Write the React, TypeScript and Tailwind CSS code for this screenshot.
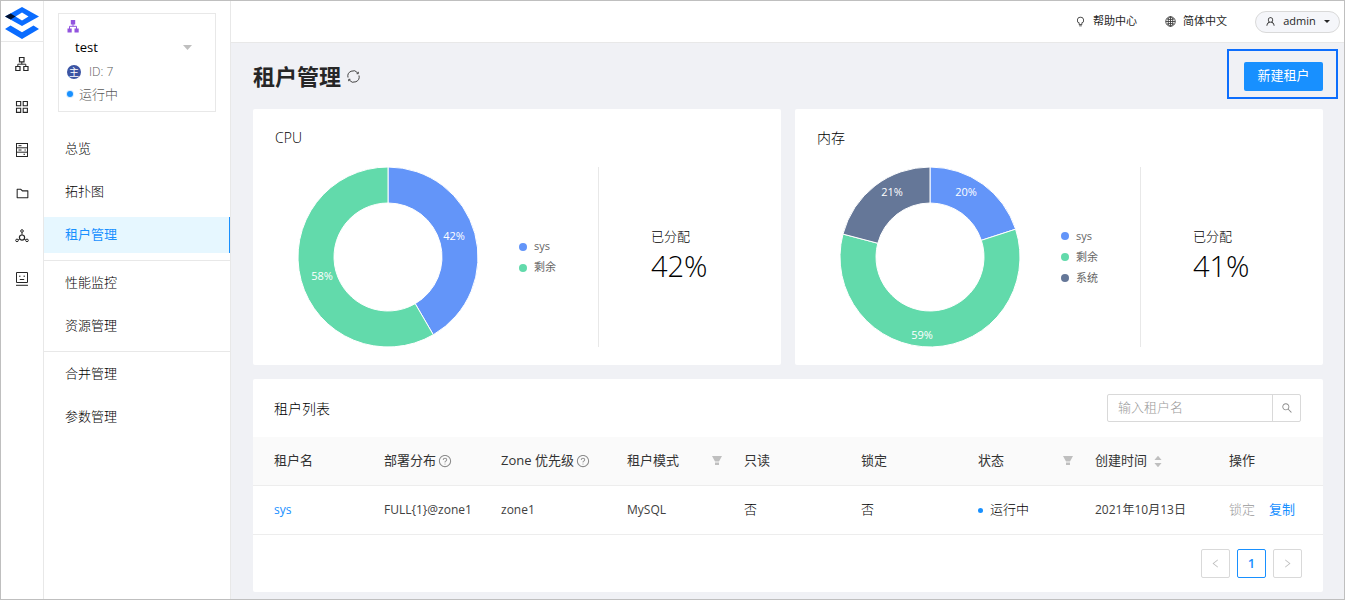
import type { ReactNode } from 'react';
import {
  AiFillCaretDown,
  AiFillCaretUp,
  AiOutlineBulb,
  AiOutlineFolder,
  AiOutlineLeft,
  AiOutlineQuestionCircle,
  AiOutlineRight,
  AiOutlineSearch,
  AiOutlineUser,
} from 'react-icons/ai';

type Slice = { name: string; label: string; share: number; color: string; x: number; y: number };

const cpu: Slice[] = [
  { name: 'sys', label: '42%', share: 0.416, color: '#6395f9', x: 156, y: 69 },
  { name: '剩余', label: '58%', share: 0.584, color: '#62daab', x: 24, y: 109 },
];

const memory: Slice[] = [
  { name: 'sys', label: '20%', share: 0.2, color: '#6395f9', x: 126, y: 25 },
  { name: '剩余', label: '59%', share: 0.591, color: '#62daab', x: 82, y: 168 },
  { name: '系统', label: '21%', share: 0.209, color: '#657798', x: 52, y: 25 },
];

function point(r: number, turn: number) {
  const a = turn * Math.PI * 2;
  return `${90 + r * Math.sin(a)} ${90 - r * Math.cos(a)}`;
}

function Donut({ slices }: { slices: Slice[] }) {
  let start = 0;
  return (
    <svg viewBox="0 0 180 180" className="size-[180px] shrink-0 font-normal">
      {slices.map((s) => {
        const from = start;
        const to = start + s.share;
        start = to;
        const big = s.share > 0.5 ? 1 : 0;
        return (
          <path
            key={s.name}
            d={`M${point(90, from)} A90 90 0 ${big} 1 ${point(90, to)} L${point(54, to)} A54 54 0 ${big} 0 ${point(54, from)} Z`}
            fill={s.color}
            stroke="#fff"
            strokeWidth="1"
          />
        );
      })}
      {slices.map((s) => (
        <text key={s.name} x={s.x} y={s.y + 4} textAnchor="middle" fontSize="11" fill="#fff">
          {s.label}
        </text>
      ))}
    </svg>
  );
}

function UsageCard({ title, slices, total }: { title: string; slices: Slice[]; total: string }) {
  return (
    <section className="rounded-xs bg-white pt-[18px] pb-[18px]">
      <h2 className="pl-[22px] text-[14px] leading-[22px]">{title}</h2>
      <div className="mt-[18px] grid grid-cols-[345fr_183fr]">
        <div className="flex items-center gap-[41px] pl-[45px]">
          <Donut slices={slices} />
          <ul>
            {slices.map((s) => (
              <li key={s.name} className="flex h-[21px] items-center gap-[7px] text-[11px] font-normal text-[#666]">
                <span className="size-[8px] rounded-full" style={{ backgroundColor: s.color }} />
                {s.name}
              </li>
            ))}
          </ul>
        </div>
        <div className="flex flex-col justify-center border-l border-[#e8e8e8] pb-[2px] pl-[52px]">
          <div className="text-[13px] leading-[20px]">已分配</div>
          <div className="text-[29px] leading-[40px]">{total}</div>
        </div>
      </div>
    </section>
  );
}

function ClusterIcon() {
  return (
    <svg viewBox="0 0 14 14" className="size-[14px]" fill="none" stroke="currentColor">
      <path d="M4.5.5h4.5v4.3H4.5zM.8 9.5h4.2v4H.8zM8.8 9.5h4.2v4H8.8z" strokeWidth="1.2" />
      <path d="M6.8 5v2.2M2.8 9.4V7.2h8v2.2" />
    </svg>
  );
}

function GridIcon() {
  return (
    <svg viewBox="0 0 14 14" className="size-[14px]" fill="none" stroke="currentColor" strokeWidth="1.1">
      <path d="M1.5 1.5h4.2v4.2H1.5zM8.2 1.5h4.2v4.2H8.2zM1.5 8.2h4.2v4.2H1.5zM8.2 8.2h4.2v4.2H8.2z" />
    </svg>
  );
}

function ServerIcon() {
  return (
    <svg viewBox="0 0 14 14" className="size-[14px]" fill="none" stroke="currentColor">
      <rect x="1.5" y="0.5" width="11" height="13" />
      <path d="M1.5 4.8h11M1.5 9.2h11M3.5 2.7h3M3.5 7h3M9.5 7h1.3M8.5 11.3h1.5" />
    </svg>
  );
}

function NodesIcon() {
  return (
    <svg viewBox="0 0 14 14" className="size-[14px]" fill="none" stroke="currentColor">
      <circle cx="7" cy="8.6" r="2.6" strokeWidth="1.2" />
      <circle cx="7" cy="2" r="1.3" />
      <circle cx="2" cy="11.4" r="1.3" />
      <circle cx="12" cy="11.4" r="1.3" />
      <path d="M7 3.3v2.6M4.8 10l-1.6.8M9.2 10l1.6.8" />
    </svg>
  );
}

function FaceIcon() {
  return (
    <svg viewBox="0 0 14 14" className="size-[14px]" fill="none" stroke="currentColor">
      <path d="M1.5.5h11v10h-11zM1 13.3h12" />
      <path d="M4 4.2h1.5M8.5 4.2h1.5M4.8 7.5h4.4" />
    </svg>
  );
}

function TreeIcon() {
  return (
    <svg viewBox="0 0 12 13" className="ml-[-1px] h-[13px] w-[12px]" fill="#9254de">
      <path d="M3.8 0h4.4v4.4H3.8zM.5 8.5h4.2v4H.5zM7.5 8.5h4.2v4H7.5z" />
      <path d="M6 4v2.3M2.5 9V6.3h7V9" fill="none" stroke="#9254de" />
    </svg>
  );
}

function RefreshIcon() {
  return (
    <svg viewBox="0 0 13 13" className="size-[13px]" fill="none" stroke="#434343">
      <path d="M1 7.5A5.5 5.5 0 0 1 10.8 3M12 5.5A5.5 5.5 0 0 1 2.2 10" />
      <path d="M11.3 1.8v1.9H9.6M1.7 11.2V9.3h1.7" />
    </svg>
  );
}

function FilterIcon() {
  return (
    <svg viewBox="0 0 10 10" className="size-[10px]" fill="currentColor">
      <path d="M0 0h10L7 5.5H3zM3 6.5h4V9H3z" />
    </svg>
  );
}

function GlobeIcon() {
  return (
    <svg viewBox="0 0 12 12" className="size-[11px]" fill="none" stroke="#333" strokeWidth=".9">
      <circle cx="6" cy="6" r="5.2" />
      <ellipse cx="6" cy="6" rx="2.5" ry="5.2" />
      <path d="M.8 6h10.4M6 .8v10.4M1.8 3.2q4.2 1.6 8.4 0M1.8 8.8q4.2-1.6 8.4 0" />
    </svg>
  );
}

function Logo() {
  return (
    <svg viewBox="0 0 34 32" className="h-[32px] w-[34px]">
      <path fill="#0a6cff" fillRule="evenodd" d="M17 0 34 9.5 17 19 0 9.5zM17 5.5 10.5 9.5 17 13.5 23.5 9.5z" />
      <path fill="#04112e" d="M5.6 6.4 10.5 9.5 5.6 12.6 0 9.5z" />
      <path fill="#0a6cff" d="M5.5 18.5 17 25.3l11.5-6.8L34 22 17 32 0 22z" />
    </svg>
  );
}

const rail: { label: string; icon: ReactNode }[] = [
  { label: '集群', icon: <ClusterIcon /> },
  { label: '租户', icon: <GridIcon /> },
  { label: '主机', icon: <ServerIcon /> },
  { label: '软件包', icon: <AiOutlineFolder className="size-[15px]" /> },
  { label: '任务', icon: <NodesIcon /> },
  { label: '系统', icon: <FaceIcon /> },
];

const menu = [['总览', '拓扑图', '租户管理'], ['性能监控', '资源管理'], ['合并管理', '参数管理']];

const columns: { title: string; width: string; extra?: 'help' | 'filter' | 'sort' }[] = [
  { title: '租户名', width: 'w-[131px]' },
  { title: '部署分布', width: 'w-[117px]', extra: 'help' },
  { title: 'Zone 优先级', width: 'w-[126px]', extra: 'help' },
  { title: '租户模式', width: 'w-[117px]', extra: 'filter' },
  { title: '只读', width: 'w-[117px]' },
  { title: '锁定', width: 'w-[117px]' },
  { title: '状态', width: 'w-[117px]', extra: 'filter' },
  { title: '创建时间', width: 'w-[134px]', extra: 'sort' },
  { title: '操作', width: 'w-[94px]' },
];

function HeadCell({ title, extra }: { title: string; extra?: string }) {
  return (
    <div className="flex items-center">
      <span>{title}</span>
      {extra === 'help' && <AiOutlineQuestionCircle className="ml-[2px] size-[14px] text-[#8c8c8c]" />}
      {extra === 'filter' && (
        <button aria-label={`筛选${title}`} className="mr-[22px] ml-auto text-[#bfbfbf]">
          <FilterIcon />
        </button>
      )}
      {extra === 'sort' && (
        <button aria-label="排序" className="ml-[6px] flex flex-col text-[#bfbfbf]">
          <AiFillCaretUp className="size-[10px]" />
          <AiFillCaretDown className="-mt-[3px] size-[10px]" />
        </button>
      )}
    </div>
  );
}

export default function App() {
  return (
    <div className="flex min-h-screen border border-[#bfbfbf] bg-white font-['Open_Sans','Noto_Sans_CJK_SC',sans-serif] text-[13px] font-light text-black">
      <nav aria-label="主导航" className="w-[43px] shrink-0 border-r border-[#e8e8e8] text-[#262626]">
        <div className="flex h-[41px] items-center justify-center border-b border-[#e8e8e8] pt-[4px]">
          <Logo />
        </div>
        <ul className="flex flex-col items-center gap-[23px] pt-[12px]">
          {rail.map((r) => (
            <li key={r.label}>
              <a href="#" aria-label={r.label} className="flex size-[20px] items-center justify-center">
                {r.icon}
              </a>
            </li>
          ))}
        </ul>
      </nav>

      <aside className="w-[187px] shrink-0 border-r border-[#e8e8e8]">
        <div className="mx-[14px] mt-[12px] h-[99px] border border-[#e8e8e8] px-[9px] pt-[6px]">
          <TreeIcon />
          <button className="mt-[3px] flex w-full items-center justify-between pr-[14px] pl-[7px] text-[13px] leading-[22px] font-normal text-black">
            test
            <svg viewBox="0 0 9 5" className="h-[5px] w-[9px]" fill="#bfbfbf">
              <path d="M0 0h9L4.5 5z" />
            </svg>
          </button>
          <div className="mt-[3px] ml-[-1px] flex items-center gap-[8px] leading-[22px] text-[#595959]">
            <span className="flex size-[14px] items-center justify-center rounded-full bg-[#3b54a3] text-[10px] leading-none font-normal text-white">
              主
            </span>
            <span className="text-[12px]">ID: 7</span>
          </div>
          <div className="ml-[-2px] flex items-center gap-[5px] leading-[22px] text-[#595959]">
            <span className="flex size-[8px] items-center justify-center rounded-full bg-[#d6ecff]">
              <span className="size-[6px] rounded-full bg-[#1890ff]" />
            </span>
            运行中
          </div>
        </div>
        <div className="mt-[19px]">
          {menu.map((group, g) => (
            <ul
              key={group[0]}
              className={g === 0 ? 'flex flex-col gap-[7px]' : 'mt-[7px] flex flex-col gap-[7px] border-t border-[#e8e8e8] pt-[4px]'}
            >
              {group.map((m) => (
                <li key={m}>
                  <a
                    href="#"
                    className={
                      m === '租户管理'
                        ? 'flex h-[36px] items-center border-r border-[#1890ff] bg-[#e6f7ff] pl-[21px] font-normal text-[#1890ff]'
                        : 'flex h-[36px] items-center pl-[21px]'
                    }
                  >
                    {m}
                  </a>
                </li>
              ))}
            </ul>
          ))}
        </div>
      </aside>

      <div className="flex min-w-0 flex-1 flex-col bg-[#f0f1f5]">
        <header className="flex h-[42px] items-center justify-end border-b border-[#e8e8e8] bg-white pr-[4px] text-[11px] font-normal text-[#262626]">
          <a href="#" className="flex items-center gap-[7px]">
            <AiOutlineBulb className="size-[11px]" />
            帮助中心
          </a>
          <a href="#" className="ml-[28px] flex items-center gap-[7px]">
            <GlobeIcon />
            简体中文
          </a>
          <button className="ml-[28px] flex h-[22px] w-[85px] items-center justify-center rounded-full border border-[#d9d9d9] bg-[#f5f6fa]">
            <AiOutlineUser className="mr-[7px] size-[11px]" />
            admin
            <svg viewBox="0 0 6 3" className="ml-[8px] h-[3px] w-[6px]" fill="#262626">
              <path d="M0 0h6L3 3z" />
            </svg>
          </button>
        </header>

        <main className="pr-[21px] pb-[7px] pl-[22px]">
          <div className="flex h-[66px] items-center gap-[6px]">
            <h1 className="text-[22px] font-bold text-[#262626]">租户管理</h1>
            <button aria-label="刷新">
              <RefreshIcon />
            </button>
            <div className="relative ml-auto">
              <button className="block h-[29px] w-[79px] rounded-xs bg-[#1890ff] text-[13px] font-normal text-white">新建租户</button>
              <span className="pointer-events-none absolute -top-[13px] -right-[15px] -bottom-[8px] -left-[17px] border-2 border-[#0d6efd]" />
            </div>
          </div>

          <div className="grid grid-cols-2 gap-[14px]">
            <UsageCard title="CPU" slices={cpu} total="42%" />
            <UsageCard title="内存" slices={memory} total="41%" />
          </div>

          <section className="mt-[14px] rounded-xs bg-white pb-[14px]">
            <div className="flex h-[58px] items-center justify-between pr-[22px] pl-[21px]">
              <h2 className="text-[14px]">租户列表</h2>
              <form className="flex h-[28px] w-[194px] rounded-xs border border-[#d9d9d9]">
                <input
                  aria-label="租户名"
                  placeholder="输入租户名"
                  className="min-w-0 flex-1 pl-[10px] text-[13px] outline-none placeholder:text-[#999]"
                />
                <button
                  type="button"
                  aria-label="搜索"
                  className="flex w-[28px] items-center justify-center border-l border-[#d9d9d9] text-[#8c8c8c]"
                >
                  <AiOutlineSearch className="size-[12px]" />
                </button>
              </form>
            </div>
            <table className="w-full table-fixed border-separate border-spacing-0 text-left">
              <thead>
                <tr className="h-[49px] bg-[#fafafa]">
                  {columns.map((c) => (
                    <th key={c.title} scope="col" className={`${c.width} border-b border-[#ededed] p-0 font-normal text-[#333] first:pl-[21px]`}>
                      <HeadCell title={c.title} extra={c.extra} />
                    </th>
                  ))}
                </tr>
              </thead>
              <tbody>
                <tr className="h-[49px] *:border-b *:border-[#ededed]">
                  <td className="pl-[21px]">
                    <a href="#" className="text-[12px] font-normal text-[#1890ff]">sys</a>
                  </td>
                  <td className="text-[12px] font-normal whitespace-nowrap text-[#404040]">{'FULL{1}@zone1'}</td>
                  <td className="text-[12px] font-normal text-[#404040]">zone1</td>
                  <td className="text-[12px] font-normal text-[#404040]">MySQL</td>
                  <td>否</td>
                  <td>否</td>
                  <td>
                    <span className="flex items-center gap-[7px]">
                      <span className="size-[5px] rounded-full bg-[#1890ff]" />
                      运行中
                    </span>
                  </td>
                  <td className="text-[12px] font-normal whitespace-nowrap text-[#404040]">2021年10月13日</td>
                  <td>
                    <span className="flex gap-[14px]">
                      <button disabled className="text-[#999]">锁定</button>
                      <a href="#" className="font-normal text-[#1890ff]">复制</a>
                    </span>
                  </td>
                </tr>
              </tbody>
            </table>
            <nav aria-label="分页" className="mt-[14px] flex justify-end gap-[7px] pr-[21px]">
              <button aria-label="上一页" className="flex size-[29px] items-center justify-center rounded-xs border border-[#d9d9d9] text-[#bfbfbf]">
                <AiOutlineLeft className="size-[11px]" />
              </button>
              <button className="flex size-[29px] items-center justify-center rounded-xs border border-[#1890ff] font-semibold text-[#1890ff]">
                1
              </button>
              <button aria-label="下一页" className="flex size-[29px] items-center justify-center rounded-xs border border-[#d9d9d9] text-[#bfbfbf]">
                <AiOutlineRight className="size-[11px]" />
              </button>
            </nav>
          </section>
        </main>
      </div>
    </div>
  );
}
